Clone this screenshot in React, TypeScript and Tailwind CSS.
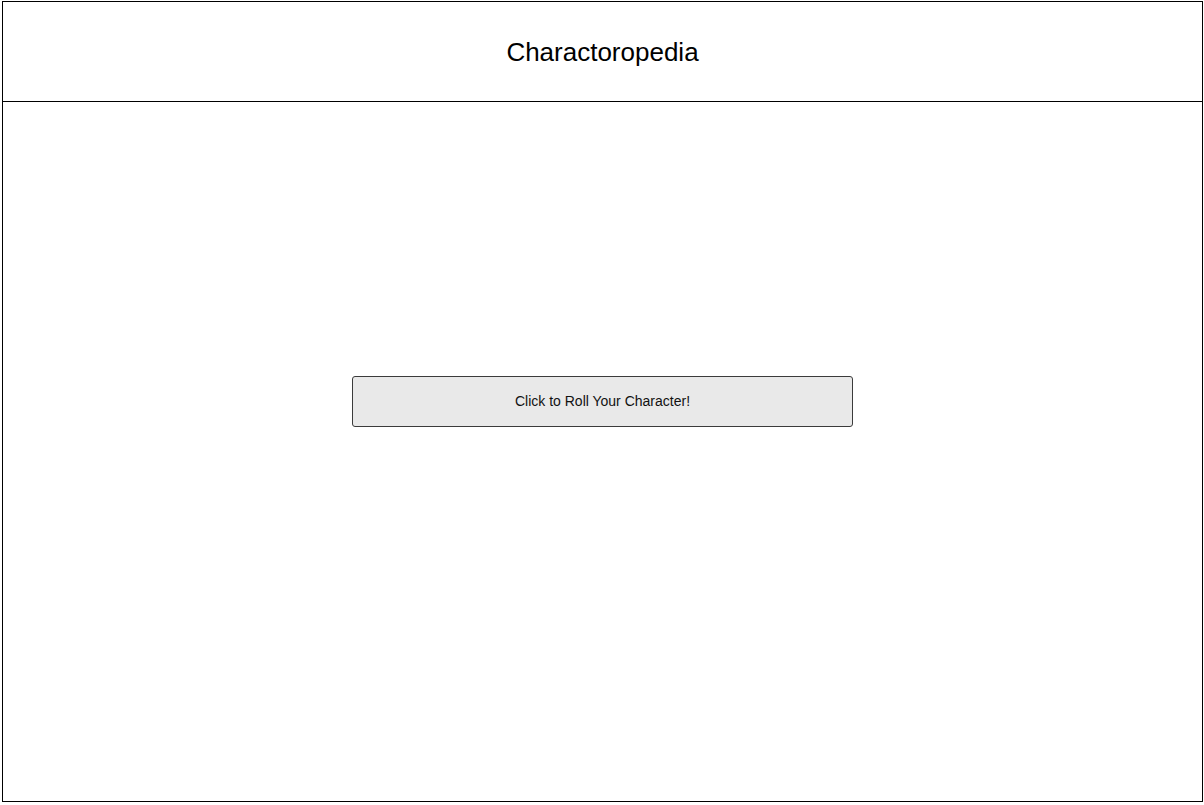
export default function App() {
  return (
    <div className="min-h-[805px] bg-white pl-[2px] pt-[1px] font-['Liberation_Sans',Arial,sans-serif] text-black">
      <header className="flex h-[101px] w-[1201px] items-center justify-center border border-black">
        <h1 className="text-[26px] leading-none">Charactoropedia</h1>
      </header>
      <main className="flex h-[700px] w-[1201px] justify-center border-x border-b border-black pt-[274px]">
        <button
          type="button"
          className="h-[51px] w-[501px] rounded-[3px] border border-[#3b3b3b] bg-[#e9e9e9] text-[14px] text-[#111]"
        >
          Click to Roll Your Character!
        </button>
      </main>
    </div>
  );
}
